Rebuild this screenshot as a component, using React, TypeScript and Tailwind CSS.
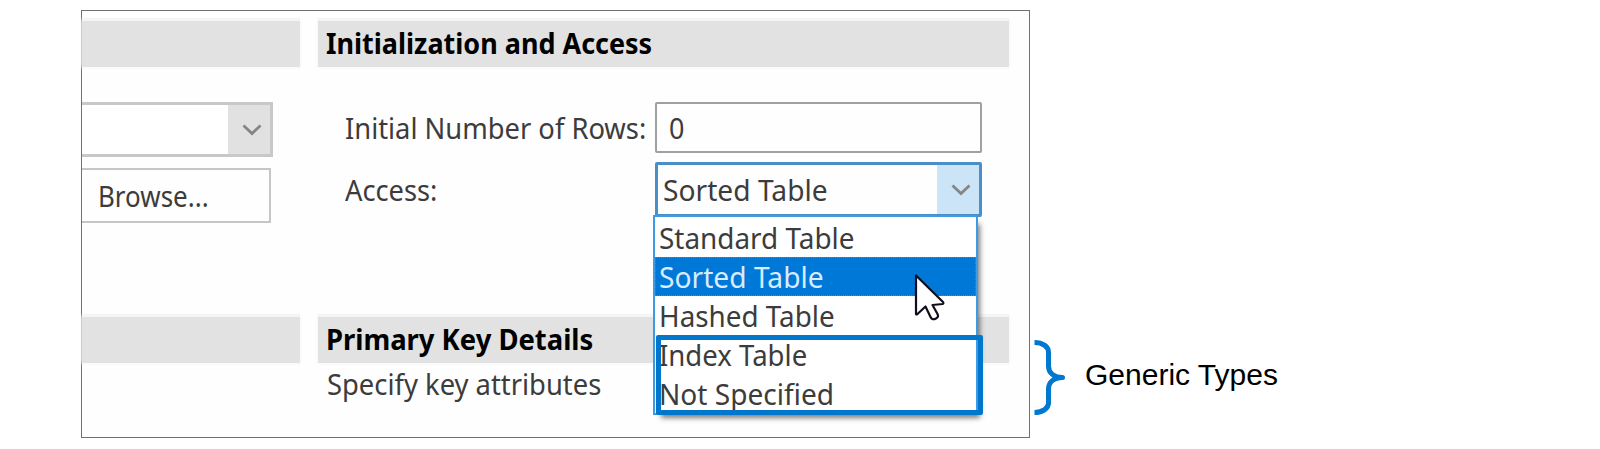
import React from 'react';

const FONT = "font-['Noto_Sans','Open_Sans',sans-serif]";

function T({ children, className = '' }: { children: React.ReactNode; className?: string }) {
  return (
    <span className={`inline-block origin-left whitespace-pre text-[29px] leading-[40px] ${className}`}>{children}</span>
  );
}

function Chevron() {
  return (
    <svg width="20" height="12" viewBox="0 0 20 12" fill="none" className="shrink-0">
      <path d="M1.5 1.5 L10 9.5 L18.5 1.5" stroke="#858585" strokeWidth="2.8" />
    </svg>
  );
}

function Header({ children }: { children?: React.ReactNode }) {
  return (
    <div className="flex h-[46px] w-full items-center bg-[#e2e2e2] pb-[3px] pl-[8px] shadow-[0_-3px_1px_0px_#f5f5f5,0_0_3px_1px_#f7f7f7]">
      {children}
    </div>
  );
}

const options = [
  { label: 'Standard Table', fit: 'scale-x-[0.962]' },
  { label: 'Sorted Table', fit: 'scale-x-[0.972]', selected: true },
  { label: 'Hashed Table', fit: 'scale-x-[0.96]' },
  { label: 'Index Table', fit: 'scale-x-[0.95]' },
  { label: 'Not Specified', fit: 'scale-x-[0.968]' },
];

function LeftColumn() {
  return (
    <div className="flex w-[218px] shrink-0 flex-col pt-[10px]">
      <Header />
      <div className="mt-[35px] flex h-[55px] w-[191px] border-y-[3px] border-r-[3px] border-[#c8c8c8] bg-white">
        <div className="flex-1" />
        <div className="flex w-[42px] items-center justify-center bg-[#e1e1e1] pl-[6px]">
          <Chevron />
        </div>
      </div>
      <div className="mt-[11px] flex h-[55px] w-[189px] items-center border-y-[2px] border-r-[2px] border-[#c6c6c6] pl-[16px]">
        <T className="scale-x-[0.895]">Browse...</T>
      </div>
      <div className="mt-[94px]">
        <Header />
      </div>
    </div>
  );
}

function Dropdown() {
  return (
    <div className="absolute left-[-2px] top-[53px] z-10 h-[200px] w-[325px] border-[2px] border-[#3d9be6] bg-white pt-px shadow-[5px_6px_5px_-3px_rgba(0,0,0,0.5)]">
      {options.map((o) => (
        <div
          key={o.label}
          className={`flex h-[39px] items-center pl-[4px] pt-px ${
            o.selected ? 'bg-[#0078d7] text-[#d9ebff] outline-1 outline-dotted outline-[#8a7a60] -outline-offset-1' : ''
          }`}
        >
          <T className={o.fit}>{o.label}</T>
        </div>
      ))}
      <div className="absolute left-[1px] top-[118px] h-[80px] w-[327px] rounded-[2px] border-[5px] border-[#0077cc]" />
      <svg className="absolute left-[259px] top-[56px]" width="34" height="50" viewBox="0 0 34 50">
        <path
          d="M2 2.5 L2 41 Q2 42 3.5 41 L11.5 33.5 L16.5 44 Q18 47.5 22 45.5 Q25 44 23.5 41 L18.5 32 L28.5 31 Q30 30.5 29 29 Z"
          fill="white"
          stroke="#10101c"
          strokeWidth="2.2"
          strokeLinejoin="round"
        />
      </svg>
    </div>
  );
}

function RightColumn() {
  return (
    <div className="flex w-[691px] shrink-0 flex-col pt-[10px]">
      <Header>
        <T className="scale-x-[0.93] font-bold text-black">Initialization and Access</T>
      </Header>
      <div className="mt-[35px] flex h-[51px] items-center pl-[27px]">
        <div className="w-[310px] shrink-0">
          <T className="scale-x-[0.942]">Initial Number of Rows:</T>
        </div>
        <div className="flex h-[51px] w-[327px] items-center rounded-[2px] border-[2px] border-[#a0a0a0] pl-[12px]">
          <T className="scale-x-[0.93]">0</T>
        </div>
      </div>
      <div className="mt-[9px] flex h-[55px] items-center pl-[27px]">
        <div className="w-[310px] shrink-0">
          <T className="scale-x-[0.94]">Access:</T>
        </div>
        <div className="relative h-[55px] w-[327px]">
          <div className="flex h-full items-center rounded-[2px] border-[3px] border-[#4a8fc8] pl-[5px]">
            <div className="flex-1">
              <T className="scale-x-[0.972]">Sorted Table</T>
            </div>
            <div className="flex h-full w-[42px] shrink-0 items-center justify-center bg-[#cce4f7] pl-[6px]">
              <Chevron />
            </div>
          </div>
          <Dropdown />
        </div>
      </div>
      <div className="mt-[100px]">
        <Header>
          <T className="scale-x-[0.945] font-bold text-black">Primary Key Details</T>
        </Header>
      </div>
      <div className="pl-[9px] pt-px">
        <T className="scale-x-[0.944]">Specify key attributes</T>
      </div>
    </div>
  );
}

export default function App() {
  return (
    <div className="flex h-[449px] w-[1600px] overflow-hidden bg-white pl-[81px] pt-[10px]">
      <div className={`flex h-[428px] w-[949px] shrink-0 gap-[18px] border border-[#707070] bg-[#fefefe] text-[#3c3c3c] ${FONT}`}>
        <LeftColumn />
        <RightColumn />
      </div>
      <div className="flex items-start pl-[4px] pt-[329px]">
        <svg width="34" height="78" viewBox="0 0 34 78" fill="none">
          <path
            d="M0.5 3.5 C9 3.5 14.5 8 14.5 13 L14.5 27 C14.5 34 20 38.5 28.5 38.5 C20 38.5 14.5 43 14.5 50 L14.5 64 C14.5 69 9 73.5 0.5 73.5"
            stroke="#0078cf"
            strokeWidth="5"
            strokeLinejoin="round"
          />
        </svg>
        <span className="ml-[17px] mt-[16px] whitespace-nowrap font-['Liberation_Sans',sans-serif] text-[30px] leading-[40px] text-black">
          Generic Types
        </span>
      </div>
    </div>
  );
}
